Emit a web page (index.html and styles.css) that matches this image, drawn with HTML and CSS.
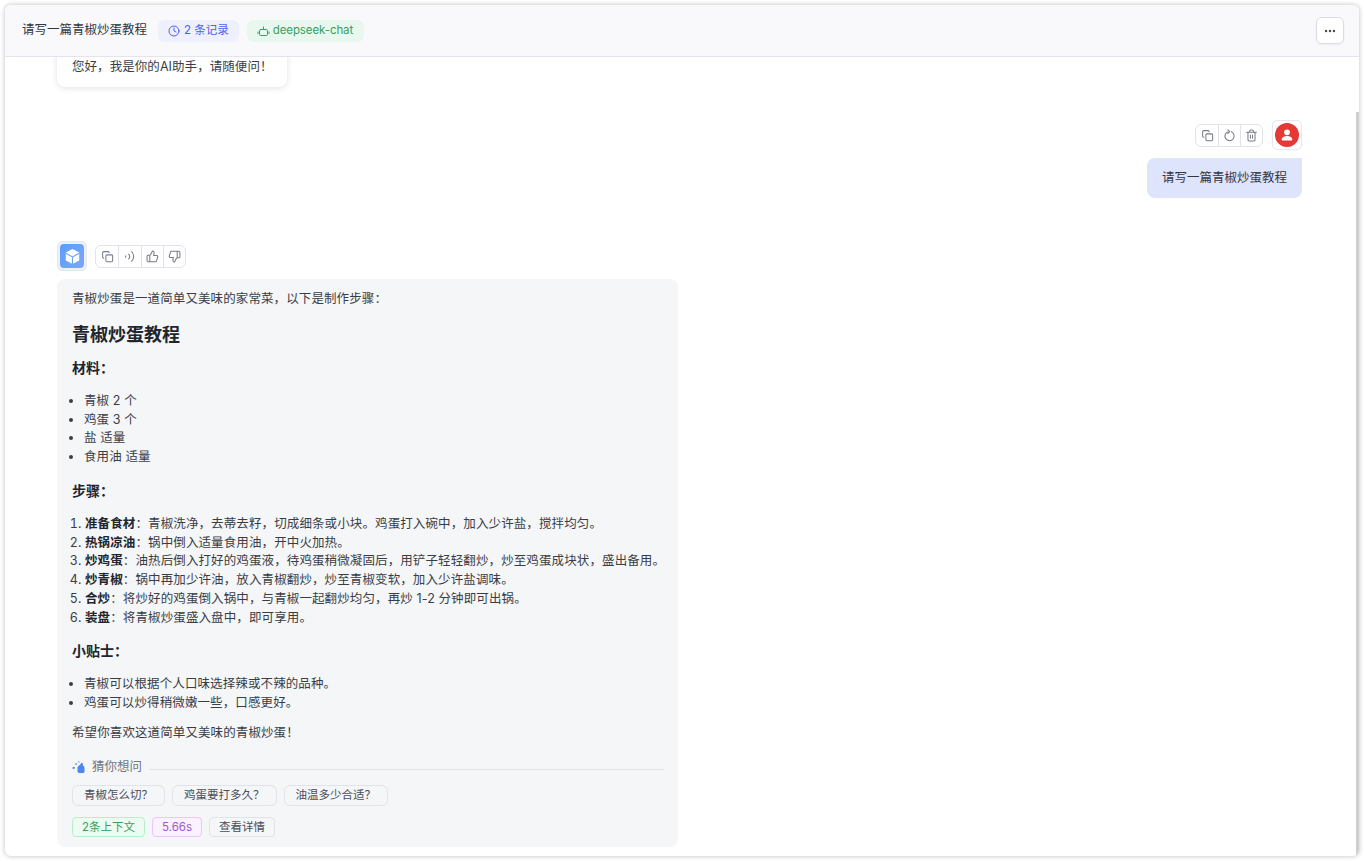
FILE: index.html
```html
<!DOCTYPE html>
<html lang="zh">
<head>
<meta charset="utf-8">
<title>请写一篇青椒炒蛋教程</title>
<link rel="stylesheet" href="styles.css">
</head>
<body>
<div class="window">
  <header class="topbar">
    <div class="topbar-left">
      <span class="title">请写一篇青椒炒蛋教程</span>
      <span class="tag tag-blue">
        <svg class="tag-icon" viewBox="0 0 24 24" fill="none" stroke="currentColor" stroke-width="2" stroke-linecap="round" stroke-linejoin="round"><circle cx="12" cy="12" r="10"/><path d="M12 6v6l4 2"/></svg>
        2 条记录</span>
      <span class="tag tag-green">
        <svg class="tag-icon-wide" viewBox="0 0 26 24" fill="none" stroke="currentColor" stroke-width="2" stroke-linecap="round" stroke-linejoin="round"><rect x="5" y="9" width="16" height="12" rx="2.500"/><path d="M13 9V4M2 14v3M24 14v3"/></svg>
        deepseek-chat</span>
    </div>
    <button class="more" aria-label="更多"><svg viewBox="0 0 16 16" fill="currentColor"><circle cx="3.500" cy="8" r="1.400"/><circle cx="8" cy="8" r="1.400"/><circle cx="12.500" cy="8" r="1.400"/></svg></button>
  </header>
  <div class="scrollbar"></div>
  <main class="messages">
    <div class="bubble-welcome">您好，我是你的AI助手，请随便问！</div>

    <section class="msg-user">
      <div class="msg-head msg-head-user">
        <div class="actions">
          <span class="act"><svg viewBox="0 0 24 24" fill="none" stroke="currentColor" stroke-width="1.900" stroke-linecap="round" stroke-linejoin="round"><rect x="9" y="9" width="12.500" height="12.500" rx="2"/><path d="M5 15c-1.100 0-2-.9-2-2V5c0-1.100.9-2 2-2h8c1.100 0 2 .9 2 2"/></svg></span>
          <span class="act"><svg viewBox="0 0 24 24" fill="none" stroke="currentColor" stroke-width="1.900" stroke-linecap="round" stroke-linejoin="round"><path d="M15.500 5.200A8.500 8.500 0 1 1 9.500 4.900"/><path d="M9 1.500 12.500 4.800 9 8"/></svg></span>
          <span class="act"><svg viewBox="0 0 24 24" fill="none" stroke="currentColor" stroke-width="1.900" stroke-linecap="round" stroke-linejoin="round"><path d="M3 6h18M8.500 6V4a2 2 0 0 1 2-2h3a2 2 0 0 1 2 2v2M5.500 6v14a2 2 0 0 0 2 2h9a2 2 0 0 0 2-2V6M10 11v6M14 11v6"/></svg></span>
        </div>
        <div class="avatar-frame">
          <div class="avatar-user"><svg viewBox="0 0 24 24" fill="#fff"><circle cx="12" cy="8" r="4.300"/><path d="M4 19c0-3.700 3.400-5.600 8-5.600s8 1.900 8 5.600c0 .7-.5 1.200-1.200 1.200H5.200C4.500 20.200 4 19.700 4 19z"/></svg></div>
        </div>
      </div>
      <div class="bubble-user">请写一篇青椒炒蛋教程</div>
    </section>

    <section class="msg-bot">
      <div class="msg-head">
        <div class="avatar-frame avatar-frame-bot">
          <div class="avatar-bot"><svg viewBox="0 0 24 24"><path fill="#fff" d="M12 1.500 21.500 6.500v11L12 22.500 2.500 17.500v-11z"/><path fill="none" stroke="#6ba3fb" stroke-width="1.500" d="M2.500 7.500 12 12.500l9.500-5M12 12.500V22.500"/></svg></div>
        </div>
        <div class="actions">
          <span class="act act-bot"><svg viewBox="0 0 24 24" fill="none" stroke="currentColor" stroke-width="1.900" stroke-linecap="round" stroke-linejoin="round"><rect x="9" y="9" width="12.500" height="12.500" rx="2"/><path d="M5 15c-1.100 0-2-.9-2-2V5c0-1.100.9-2 2-2h8c1.100 0 2 .9 2 2"/></svg></span>
          <span class="act act-bot"><svg viewBox="0 0 24 24" fill="none" stroke="currentColor" stroke-width="1.900" stroke-linecap="round" stroke-linejoin="round"><path d="M5 10.500v3M10.500 7.500a7 7 0 0 1 0 9M16 3a13 13 0 0 1 0 18"/></svg></span>
          <span class="act act-bot"><svg viewBox="0 0 24 24" fill="none" stroke="currentColor" stroke-width="1.900" stroke-linecap="round" stroke-linejoin="round"><path d="M7 10v11M15 5.900 14 10h5.800a2 2 0 0 1 1.900 2.500l-2.300 7.500a2 2 0 0 1-1.900 1.500H4a2 2 0 0 1-2-2v-8a2 2 0 0 1 2-2h2.800a2 2 0 0 0 1.800-1.100L12 2a3.100 3.100 0 0 1 3 3.900z"/></svg></span>
          <span class="act act-bot"><svg viewBox="0 0 24 24" fill="none" stroke="currentColor" stroke-width="1.900" stroke-linecap="round" stroke-linejoin="round"><path d="M17 14V3M9 18.100 10 14H4.200a2 2 0 0 1-1.900-2.500l2.300-7.500A2 2 0 0 1 6.500 2.500H20a2 2 0 0 1 2 2v8a2 2 0 0 1-2 2h-2.800a2 2 0 0 0-1.800 1.100L12 22a3.100 3.100 0 0 1-3-3.900z"/></svg></span>
        </div>
      </div>
      <article class="bubble-bot">
        <p class="para">青椒炒蛋是一道简单又美味的家常菜，以下是制作步骤：</p>
        <h2 class="h-main">青椒炒蛋教程</h2>
        <h3 class="h-sub">材料：</h3>
        <ul class="list">
          <li>青椒 2 个</li>
          <li>鸡蛋 3 个</li>
          <li>盐 适量</li>
          <li>食用油 适量</li>
        </ul>
        <h3 class="h-sub">步骤：</h3>
        <ol class="list list-num">
          <li><strong>准备食材</strong>：青椒洗净，去蒂去籽，切成细条或小块。鸡蛋打入碗中，加入少许盐，搅拌均匀。</li>
          <li><strong>热锅凉油</strong>：锅中倒入适量食用油，开中火加热。</li>
          <li><strong>炒鸡蛋</strong>：油热后倒入打好的鸡蛋液，待鸡蛋稍微凝固后，用铲子轻轻翻炒，炒至鸡蛋成块状，盛出备用。</li>
          <li><strong>炒青椒</strong>：锅中再加少许油，放入青椒翻炒，炒至青椒变软，加入少许盐调味。</li>
          <li><strong>合炒</strong>：将炒好的鸡蛋倒入锅中，与青椒一起翻炒均匀，再炒 1-2 分钟即可出锅。</li>
          <li><strong>装盘</strong>：将青椒炒蛋盛入盘中，即可享用。</li>
        </ol>
        <h3 class="h-sub">小贴士：</h3>
        <ul class="list">
          <li>青椒可以根据个人口味选择辣或不辣的品种。</li>
          <li>鸡蛋可以炒得稍微嫩一些，口感更好。</li>
        </ul>
        <p class="para para-last">希望你喜欢这道简单又美味的青椒炒蛋！</p>
        <div class="guess-head">
          <svg class="guess-icon" viewBox="0 0 14 14" fill="#4d86ee"><path d="M5.500 7 8.500 4.200 9.500 2.800 11 3.500 10.800 5.500 12 6.200 12.500 8v3.500c0 .9-.7 1.500-1.500 1.500H7.500C6.300 13 5.500 12 5.500 11z"/><rect x="0.500" y="7" width="2.400" height="1.800" rx=".6"/><rect x="3.200" y="3" width="1.800" height="2" rx=".5" opacity=".7"/><rect x="6" y="1" width="1.600" height="1.600" rx=".4" opacity=".6"/></svg>
          <span class="guess-label">猜你想问</span>
          <span class="guess-line"></span>
        </div>
        <div class="chips">
          <span class="chip">青椒怎么切？</span>
          <span class="chip">鸡蛋要打多久？</span>
          <span class="chip">油温多少合适？</span>
        </div>
        <div class="meta">
          <span class="meta-tag meta-green">2条上下文</span>
          <span class="meta-tag meta-purple">5.66s</span>
          <span class="meta-tag meta-gray">查看详情</span>
        </div>
      </article>
    </section>
  </main>
</div>
</body>
</html>
```
FILE: styles.css
```css
* { box-sizing: border-box; }
html, body { height: 100%; }
body {
  margin: 0;
  background: #fff;
  font-family: Inter, "Noto Sans CJK SC", sans-serif;
  font-size: 12.5px;
  line-height: 18.75px;
  color: #3a3d45;
  overflow: hidden;
  padding: 5px;
}
.window {
  position: relative;
  height: 851px;
  width: 1354px;
  background: #fff;
  border-radius: 6px;
  box-shadow: 0 0 4px 1px rgba(0,0,0,.18);
  overflow: hidden;
  display: flex;
  flex-direction: column;
}
.topbar {
  flex: none;
  height: 52px;
  display: flex;
  align-items: center;
  justify-content: space-between;
  padding: 0 15px 0 17px;
  background: #f9f9fc;
  border-bottom: 1px solid #e4e4ee;
}
.topbar-left { display: flex; align-items: center; gap: 8px; }
.title { color: #33363e; margin-right: 3px; }
.tag {
  display: inline-flex;
  align-items: center;
  gap: 4px;
  height: 22px;
  padding: 0 10px;
  border-radius: 6px;
  font-size: 11.5px;
}
.tag-blue { background: #eef0fe; color: #4f5ff0; }
.tag-green { background: #e9f8ef; color: #3c9c5f; gap: 3px; padding-right: 11px; letter-spacing: -.1px; }
.tag-icon { width: 12px; height: 12px; }
.tag-icon-wide { width: 13px; height: 12px; }
.more {
  width: 28px;
  height: 27px;
  padding: 0;
  display: flex;
  align-items: center;
  justify-content: center;
  background: #fff;
  color: #4a4d58;
  border: 1px solid #dcdce8;
  border-radius: 6px;
  box-shadow: 0 1px 2px rgba(0,0,0,.05);
}
.more svg { width: 14px; height: 14px; }
.scrollbar {
  position: absolute;
  right: 0;
  top: 107px;
  bottom: 0;
  width: 3px;
  background: #cfcfd2;
}
.messages {
  flex: 1;
  min-height: 0;
  overflow: hidden;
  padding: 0 57px 0 52px;
}
.bubble-welcome {
  width: 230px;
  height: 50px;
  margin-top: -20px;
  padding: 21px 15px 0;
  background: #fff;
  border-radius: 8px;
  box-shadow: 0 1px 6px rgba(0,0,0,.12);
  letter-spacing: .06px;
  white-space: nowrap;
}
.msg-user { margin-top: 33px; display: flex; flex-direction: column; align-items: flex-end; }
.msg-head { display: flex; align-items: center; gap: 8px; height: 30px; }
.msg-head-user { gap: 9px; }
.actions {
  display: flex;
  height: 23px;
  background: #fff;
  border: 1px solid #e2e3ea;
  border-radius: 6px;
}
.act {
  width: 22px;
  display: flex;
  align-items: center;
  justify-content: center;
  color: #777b88;
  border-left: 1px solid #e2e3ea;
}
.act-bot { width: 22.25px; }
.act:first-child { border-left: 0; }
.act svg { width: 13px; height: 13px; }
.avatar-frame {
  width: 30px;
  height: 30px;
  padding: 2px;
  background: #fff;
  border: 1px solid #e6e6ee;
  border-radius: 5px;
}
.avatar-frame-bot { background: #eef0f8; }
.avatar-user {
  width: 100%;
  height: 100%;
  border-radius: 50%;
  background: #e53935;
  display: flex;
  align-items: center;
  justify-content: center;
}
.avatar-user svg { width: 16px; height: 16px; }
.avatar-bot {
  width: 100%;
  height: 100%;
  border-radius: 4px;
  background: linear-gradient(135deg, #5c9cfb, #7aa8fa);
  display: flex;
  align-items: center;
  justify-content: center;
}
.avatar-bot svg { width: 17px; height: 17px; }
.bubble-user {
  margin-top: 8px;
  height: 40px;
  padding: 0 15px;
  display: flex;
  align-items: center;
  background: #dfe4fd;
  border-radius: 8px 0 8px 8px;
  color: #33363e;
}
.msg-bot { margin-top: 43px; }
.bubble-bot {
  margin-top: 8px;
  width: 621px;
  height: 568px;
  padding: 11px 15px 10px;
  background: #f5f6f8;
  border-radius: 8px;
}
.para { margin: 0; letter-spacing: .1px; }
.para-last { margin-top: 11px; }
.h-main { margin: 12px 0 0; font-size: 18px; line-height: 27px; font-weight: 600; color: #22252c; }
.h-sub { margin: 9px 0 0; font-size: 14px; line-height: 21px; font-weight: 600; color: #22252c; }
.list { margin: 12px 0 0; padding: 0 0 0 12px; letter-spacing: .11px; white-space: nowrap; }
.list-num { padding-left: 13px; }
.list strong { font-weight: 600; color: #22252c; }
.h-sub + .list { margin-top: 14px; }
.list + .h-sub { margin-top: 13px; }
.guess-head { margin-top: 15px; display: flex; align-items: center; gap: 6px; color: #71757f; }
.guess-icon { width: 14px; height: 14px; }
.guess-line { flex: 1; height: 1px; margin: 6px -1px 0 1px; background: #e2e3ea; }
.chips { margin-top: 9px; display: flex; gap: 7px; }
.chip {
  height: 21px;
  padding: 0 11px;
  display: flex;
  align-items: center;
  font-size: 11.5px;
  color: #4a4d58;
  border: 1px solid #e2e3ea;
  border-radius: 6px;
}
.meta { margin-top: 11px; display: flex; gap: 7px; }
.meta-tag {
  height: 20px;
  padding: 0 9px;
  display: flex;
  align-items: center;
  font-size: 11.5px;
  border-radius: 4px;
  border: 1px solid #e2e3ea;
}
.meta-green { color: #3c9c5f; border-color: #b5efc9; background: #eefbf2; }
.meta-purple { color: #a355d0; border-color: #ecc5fb; background: #faf2fe; }
.meta-gray { color: #4a4d58; }
```
